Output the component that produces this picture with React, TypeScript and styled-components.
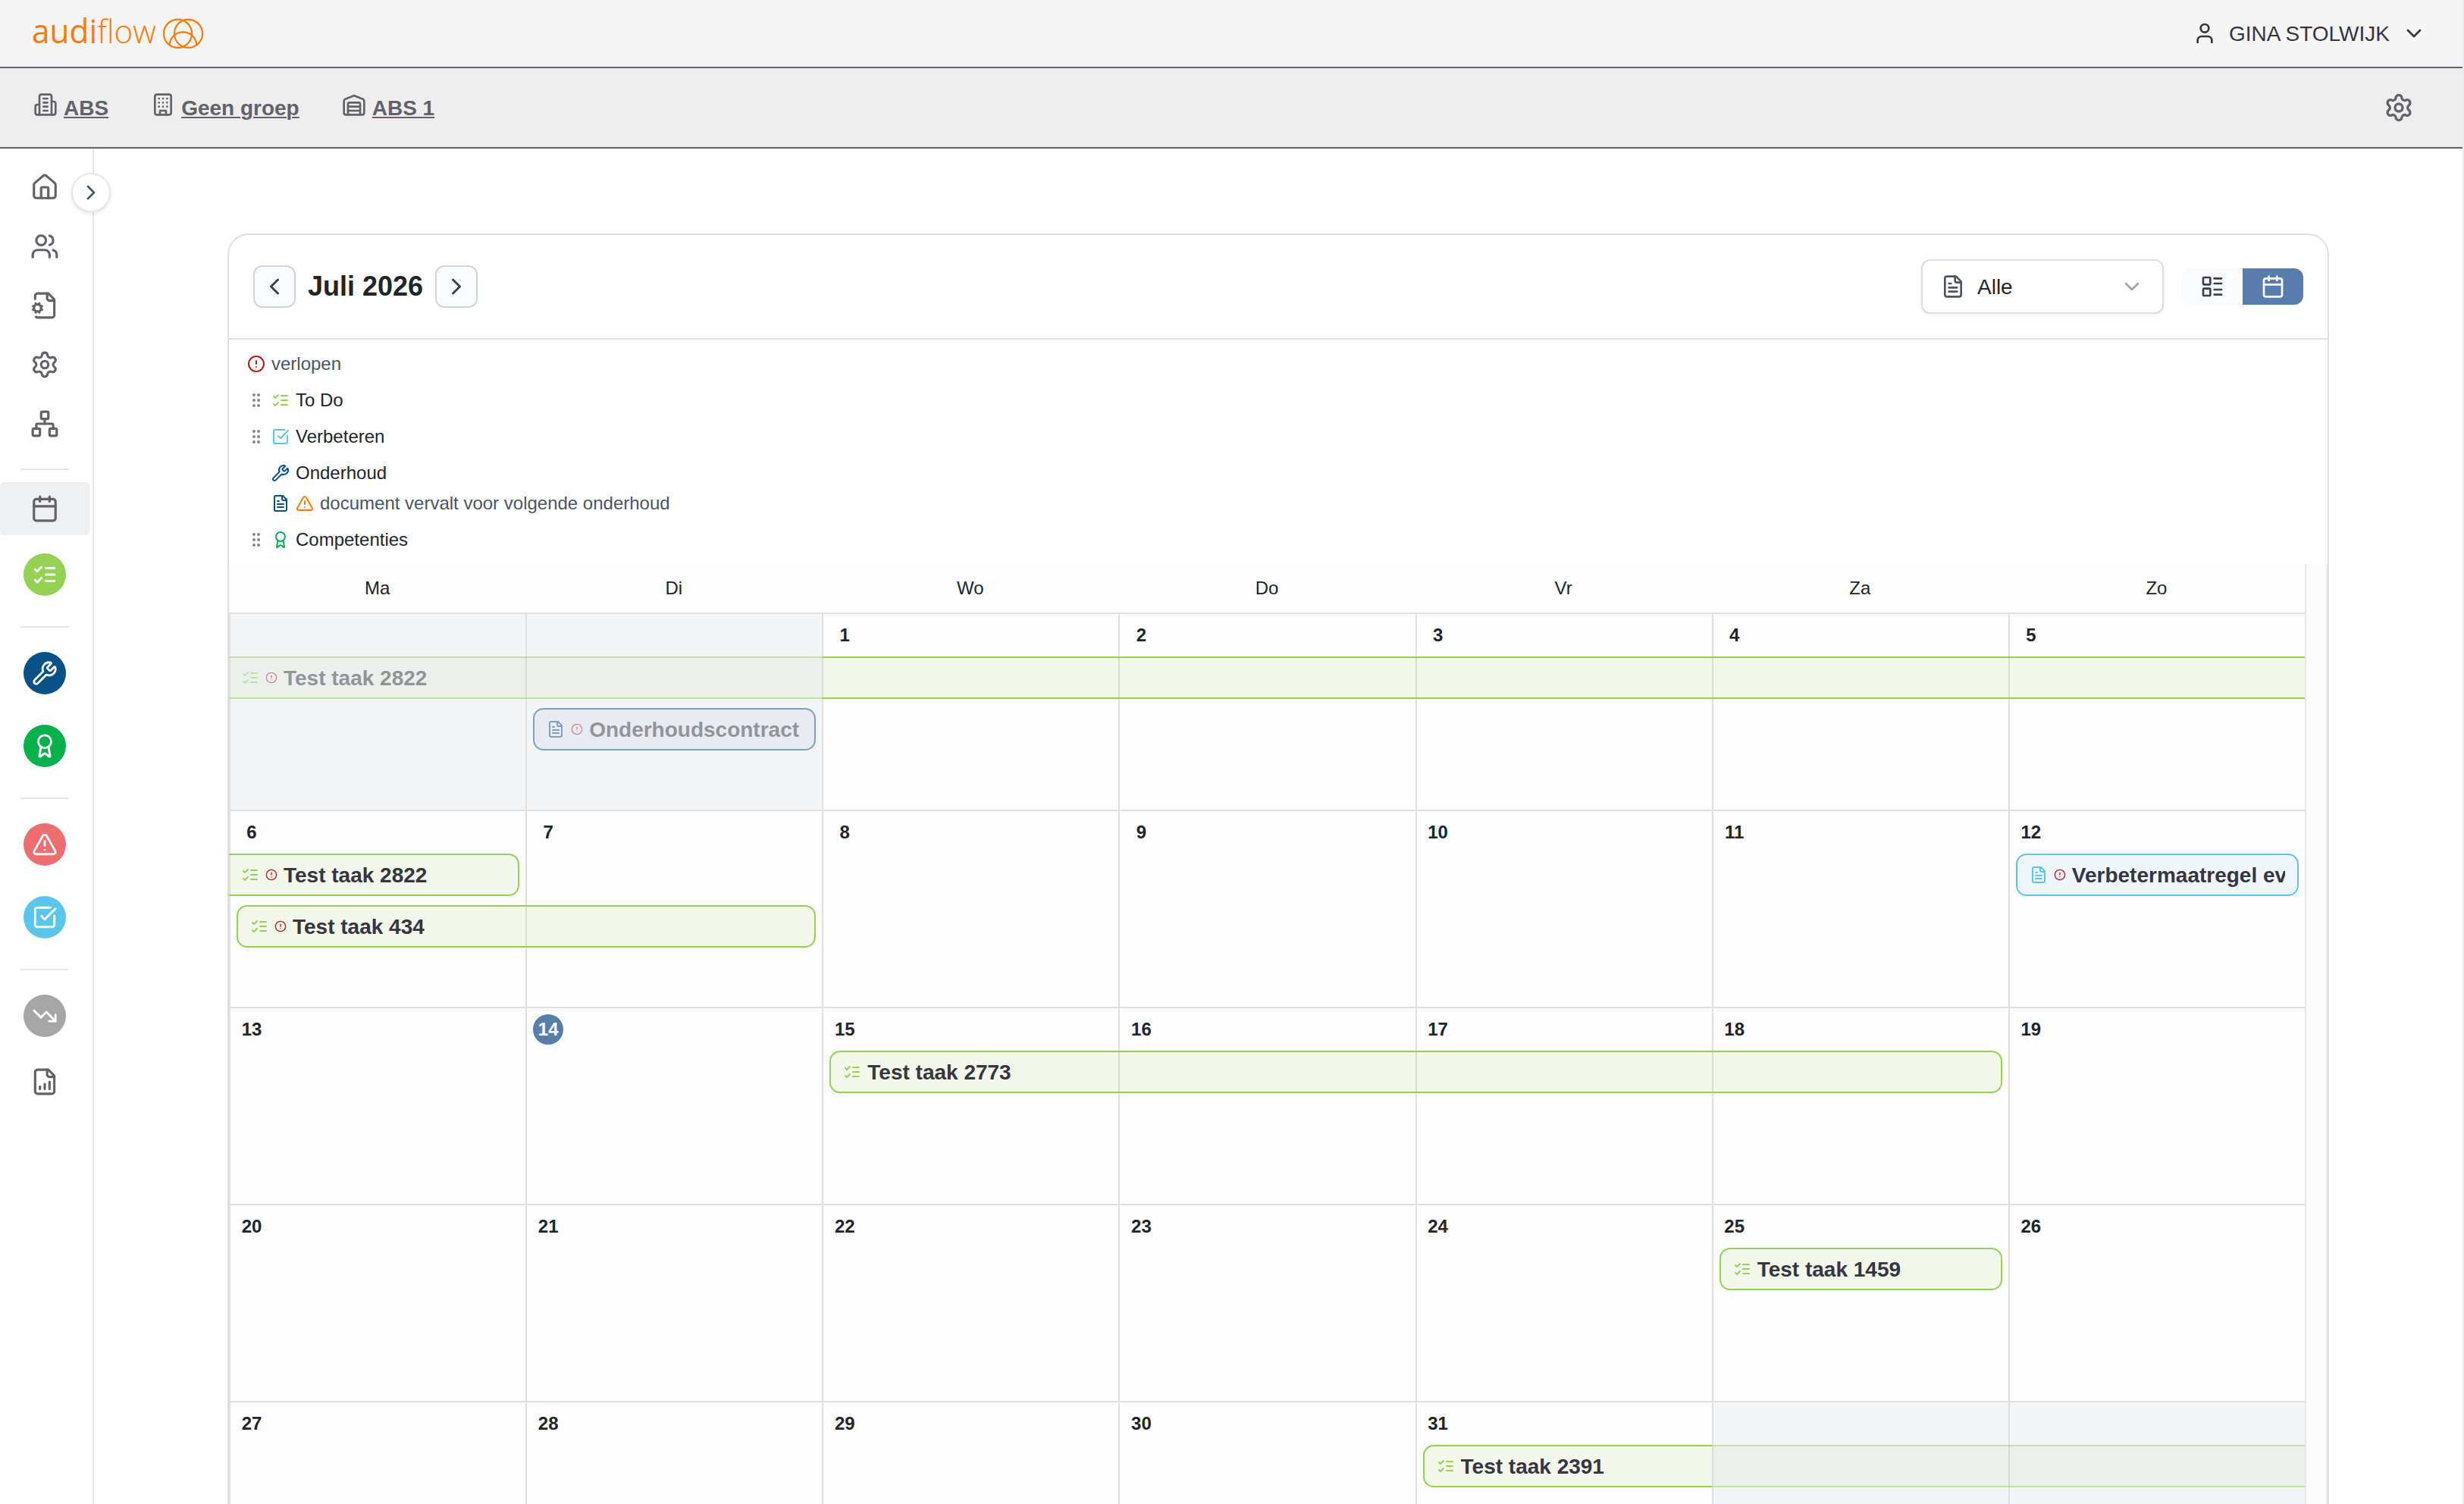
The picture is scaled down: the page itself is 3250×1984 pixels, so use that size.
import React from 'react';
import styled, { createGlobalStyle, css } from 'styled-components';
import {
  Award, Calendar, ChevronDown, ChevronLeft, ChevronRight, CircleAlert, GripVertical, House,
  LayoutList, Network, Settings, SquareCheckBig, TrendingDown, TriangleAlert, User, Users, Wrench,
} from 'lucide-react';

const GlobalStyle = createGlobalStyle`
  *, *::before, *::after { box-sizing: border-box; }
  body {
    margin: 0;
    background: #fff;
    font-family: "Liberation Sans", Arial, sans-serif;
    color: #212529;
    overflow: hidden;
  }
  svg { display: block; flex: none; }
`;

const c = {
  line: '#e0e0e0',
  grey: '#63626b',
  green: '#94d254',
  blue: '#577dad',
  navy: '#075389',
  cyan: '#5bc6ec',
  red: '#b91c1c',
  leaf: '#05b04d',
  orange: '#ff7a0a',
};

const Page = styled.div`
  width: 3250px;
  height: 1984px;
  overflow: hidden;
  display: flex;
  flex-direction: column;
  border-right: 2px solid #ebebed;
`;

const TopBar = styled.header`
  flex: none;
  height: 90px;
  padding: 0 48px 0 40px;
  display: flex;
  align-items: center;
  justify-content: space-between;
  background: #f5f5f5;
  border-bottom: 2px solid ${c.grey};
`;

const UserMenu = styled.div`
  display: flex;
  align-items: center;
  font-size: 28px;
  line-height: 32px;
  color: #363540;
  span { margin: 0 16px; padding-top: 2px; }
`;

const CrumbBar = styled.nav`
  flex: none;
  height: 106px;
  padding: 0 64px 0 44px;
  display: flex;
  align-items: center;
  justify-content: space-between;
  background: #eee;
  color: ${c.grey};
  border-bottom: 2px solid ${c.grey};
`;

const Crumbs = styled.div`
  display: flex;
  gap: 56px;
  padding-top: 2px;
`;

const Crumb = styled.a`
  display: flex;
  gap: 8px;
  font-size: 28px;
  line-height: 42px;
  font-weight: 700;
  text-decoration: underline;
  text-decoration-thickness: 2px;
  text-underline-offset: 2px;
`;

const Body = styled.div`
  flex: 1;
  min-height: 0;
  display: flex;
`;

const Sidebar = styled.aside`
  position: relative;
  flex: none;
  width: 124px;
  padding-top: 16px;
  padding-right: 4px;
  display: flex;
  flex-direction: column;
  border-right: 2px solid #e5e5ea;
  color: ${c.grey};
`;

const SideItem = styled.div<{ $active?: boolean; $top?: number }>`
  flex: none;
  height: 70px;
  width: 119px;
  padding-right: 1px;
  margin-top: ${p => p.$top ?? 8}px;
  display: flex;
  align-items: center;
  justify-content: center;
  border-radius: 6px;
  background: ${p => (p.$active ? '#eff0f2' : 'transparent')};
`;

const Bubble = styled.div<{ $color: string; $top: number }>`
  flex: none;
  width: 56px;
  height: 56px;
  margin: ${p => p.$top}px 0 0 31px;
  border-radius: 50%;
  display: flex;
  align-items: center;
  justify-content: center;
  background: ${p => p.$color};
  color: #fff;
`;

const SideRule = styled.hr<{ $top: number }>`
  flex: none;
  width: 64px;
  height: 2px;
  border: 0;
  margin: ${p => p.$top}px 0 0 27px;
  background: #e5e5ea;
`;

const Expand = styled.button`
  position: absolute;
  top: 32px;
  left: 94px;
  width: 52px;
  height: 52px;
  padding: 0;
  border-radius: 50%;
  border: 2px solid #e5e7eb;
  background: #fff;
  color: #475569;
  display: flex;
  align-items: center;
  justify-content: center;
  box-shadow: 0 2px 5px rgba(0, 0, 0, 0.1);
`;

const Main = styled.main`
  flex: 1;
  padding: 112px 176px 0 176px;
  display: flex;
`;

const Card = styled.section`
  flex: 1;
  height: 1900px;
  display: flex;
  flex-direction: column;
  border: 2px solid ${c.line};
  border-radius: 28px;
`;

const CardHead = styled.div`
  flex: none;
  height: 138px;
  padding: 0 32px;
  display: flex;
  align-items: center;
  justify-content: space-between;
  border-bottom: 2px solid ${c.line};
`;

const Group = styled.div<{ $gap: number }>`
  display: flex;
  align-items: center;
  gap: ${p => p.$gap}px;
`;

const NavButton = styled.button`
  width: 56px;
  height: 56px;
  padding: 0;
  display: flex;
  align-items: center;
  justify-content: center;
  border: 2px solid #d1d5db;
  border-radius: 12px;
  background: #f9fafb;
  color: #374151;
`;

const Title = styled.h2`
  margin: 0;
  font-size: 36px;
  line-height: 44px;
  font-weight: 700;
`;

const Select = styled.div`
  width: 320px;
  height: 72px;
  padding: 0 24px;
  display: flex;
  align-items: center;
  border: 2px solid #dedede;
  border-radius: 12px;
  background: #fff;
  box-shadow: 0 2px 4px rgba(0, 0, 0, 0.06);
  font-size: 28px;
  color: #4b5563;
  span { flex: 1; margin-left: 16px; padding-top: 1px; color: #212529; }
`;

const Switch = styled.div`
  display: flex;
  border-radius: 12px;
  overflow: hidden;
`;

const SwitchItem = styled.div<{ $on?: boolean }>`
  width: 80px;
  height: 48px;
  display: flex;
  align-items: center;
  justify-content: center;
  background: ${p => (p.$on ? c.blue : '#f9fafb')};
  color: ${p => (p.$on ? '#fff' : '#374151')};
`;

const Legend = styled.div`
  flex: none;
  height: 296px;
  padding: 12px 24px 0;
  font-size: 24px;
`;

const LegendRow = styled.div<{ $tight?: boolean; $indent?: boolean; $muted?: boolean }>`
  height: 40px;
  margin-top: ${p => (p.$tight ? 0 : 8)}px;
  padding-left: ${p => (p.$indent ? 32 : 0)}px;
  display: flex;
  align-items: center;
  gap: 8px;
  color: ${p => (p.$muted ? '#4b5563' : '#212529')};
  &:first-child { margin-top: 0; }
`;

const CalendarWrap = styled.div`
  flex: 1;
  display: flex;
`;

const CalendarTable = styled.div`
  flex: 1;
  background: #fdfdfd;
`;

const Track = styled.div`
  width: 30px;
  background: #fafafa;
  border: solid #e8e8e8;
  border-width: 0 2px;
`;

const WeekHead = styled.div`
  display: grid;
  grid-template-columns: repeat(7, 1fr);
  height: 64px;
  font-size: 24px;
  line-height: 64px;
  text-align: center;
`;

const Week = styled.div`
  display: grid;
  grid-template-columns: repeat(7, minmax(0, 1fr));
  grid-template-rows: 56px 56px 12px 56px 1fr;
  height: 260px;
  border-top: 2px solid ${c.line};
`;

const Day = styled.div<{ $col: number; $out: boolean }>`
  grid-row: 1 / -1;
  grid-column: ${p => p.$col};
  padding: 8px;
  border-left: 2px solid ${c.line};
  background: ${p => (p.$out ? '#f2f4f6' : 'transparent')};
`;

const DayNumber = styled.div<{ $today: boolean }>`
  width: 40px;
  height: 40px;
  border-radius: 50%;
  text-align: center;
  font-size: 24px;
  line-height: 40px;
  font-weight: 700;
  white-space: nowrap;
  ${p => p.$today && css`background: ${c.blue}; color: #fff;`}
`;

type Kind = 'todo' | 'document' | 'improve';
const kindColor: Record<Kind, string> = { todo: c.green, document: c.navy, improve: c.cyan };
const kindTint: Record<Kind, string> = {
  todo: 'rgba(145, 185, 80, 0.1)',
  document: 'rgba(87, 115, 173, 0.12)',
  improve: '#eff7fd',
};

const Bar = styled.div<{ $kind: Kind; $from: number; $to: number; $line: number; $start: boolean; $end: boolean; $dim: boolean }>`
  grid-row: ${p => p.$line * 2};
  grid-column: ${p => p.$from} / ${p => p.$to + 1};
  margin-left: ${p => (p.$start ? 10 : 0)}px;
  margin-right: ${p => (p.$end ? 8 : 0)}px;
  padding: 0 16px;
  display: flex;
  align-items: center;
  gap: 8px;
  overflow: hidden;
  border: 2px solid ${p => kindColor[p.$kind]};
  border-left-width: ${p => (p.$start ? 2 : 0)}px;
  border-right-width: ${p => (p.$end ? 2 : 0)}px;
  border-radius: ${p => (p.$start ? 14 : 0)}px ${p => (p.$end ? 14 : 0)}px ${p => (p.$end ? 14 : 0)}px ${p => (p.$start ? 14 : 0)}px;
  background: ${p => kindTint[p.$kind]};
  opacity: ${p => (p.$dim ? 0.5 : 1)};
  z-index: 1;
`;

const BarText = styled.span`
  flex: 1;
  padding-top: 2px;
  overflow: hidden;
  white-space: nowrap;
  font-size: 28px;
  line-height: 36px;
  font-weight: 700;
  color: #363540;
`;

interface IconProps { size: number; color?: string }

const LineIcon = ({ size, color = 'currentColor', children }: IconProps & { children: React.ReactNode }) => (
  <svg
    width={size} height={size} viewBox="0 0 24 24" fill="none" stroke={color}
    strokeWidth={2} strokeLinecap="round" strokeLinejoin="round"
  >
    {children}
  </svg>
);

const ListChecks = (p: IconProps) => (
  <LineIcon {...p}>
    <path d="m3 17 2 2 4-4" />
    <path d="m3 7 2 2 4-4" />
    <path d="M13 6h8M13 12h8M13 18h8" />
  </LineIcon>
);

const Sheet = () => (
  <>
    <path d="M15 2H6a2 2 0 0 0-2 2v16a2 2 0 0 0 2 2h12a2 2 0 0 0 2-2V7Z" />
    <path d="M14 2v4a2 2 0 0 0 2 2h4" />
  </>
);

const FileText = (p: IconProps) => (
  <LineIcon {...p}>
    <Sheet />
    <path d="M10 9H8M16 13H8M16 17H8" />
  </LineIcon>
);

const FileChart = (p: IconProps) => (
  <LineIcon {...p}>
    <Sheet />
    <path d="M8 18v-2M12 18v-4M16 18v-6" />
  </LineIcon>
);

const FileCog = (p: IconProps) => (
  <LineIcon {...p}>
    <path d="M14 2v4a2 2 0 0 0 2 2h4" />
    <path d="M4.700 21.500A2 2 0 0 0 6 22h12a2 2 0 0 0 2-2V7l-5-5H6a2 2 0 0 0-2 2v2.500" />
    <path d="m3.200 12.900-.9-.4M3.200 15.100l-.9.4M4.900 11.200l-.4-.9M4.900 16.800l-.4.9M7.500 10.300l-.4.9M7.500 17.700l-.4-.9M9.700 12.500l-.9.400M9.700 15.500l-.9-.4" />
    <circle cx="6" cy="14" r="3" />
  </LineIcon>
);

const OfficeIcon = (p: IconProps) => (
  <LineIcon {...p}>
    <path d="M6 22V4a2 2 0 0 1 2-2h8a2 2 0 0 1 2 2v18Z" />
    <path d="M6 12H4a2 2 0 0 0-2 2v6a2 2 0 0 0 2 2h2" />
    <path d="M18 9h2a2 2 0 0 1 2 2v9a2 2 0 0 1-2 2h-2" />
    <path d="M10 6h4M10 10h4M10 14h4M10 18h4" />
  </LineIcon>
);

const BuildingIcon = (p: IconProps) => (
  <LineIcon {...p}>
    <rect width="16" height="20" x="4" y="2" rx="2" />
    <path d="M9 22v-4h6v4M8 6h.01M16 6h.01M12 6h.01M12 10h.01M12 14h.01M16 10h.01M16 14h.01M8 10h.01M8 14h.01" />
  </LineIcon>
);

const WarehouseIcon = (p: IconProps) => (
  <LineIcon {...p}>
    <path d="M22 8.350V20a2 2 0 0 1-2 2H4a2 2 0 0 1-2-2V8.350A2 2 0 0 1 3.260 6.500l8-3.200a2 2 0 0 1 1.480 0l8 3.200A2 2 0 0 1 22 8.350Z" />
    <path d="M6 18h12M6 14h12" />
    <path d="M6 22V11a1 1 0 0 1 1-1h10a1 1 0 0 1 1 1v11" />
  </LineIcon>
);

const Grip = () => <GripVertical size={24} color="#85858c" />;

const Logo = () => (
  <svg width="231" height="72" viewBox="-3 -12 231 72" fill="none">
    <text
      x="-1" y="36.500" fill={c.orange} fontFamily="'Open Sans', sans-serif" fontSize="43"
      textLength="164" lengthAdjust="spacingAndGlyphs"
    >
      <tspan fontWeight="400">audi</tspan><tspan fontWeight="300">flow</tspan>
    </text>
    <g stroke={c.orange} strokeWidth="2.200">
      <circle cx="191.500" cy="24.300" r="18.600" />
      <circle cx="205.500" cy="24.300" r="18.600" />
      <path d="M180.700 38.800A17.850 17.850 0 0 1 216.300 38.800" />
    </g>
  </svg>
);

interface Entry { kind: Kind; from: number; to: number; line?: number; start?: boolean; end?: boolean; dim?: boolean; late?: boolean; text?: string }

function EventBar({ kind, from, to, line = 1, start = false, end = false, dim = false, late, text }: Entry) {
  const Icon = kind === 'todo' ? ListChecks : FileText;
  return (
    <Bar $kind={kind} $from={from} $to={to} $line={line} $start={start} $end={end} $dim={dim}>
      {text && (
        <>
          <Icon size={24} color={kindColor[kind]} />
          {late && <CircleAlert size={16} color={c.red} />}
          <BarText>{text}</BarText>
        </>
      )}
    </Bar>
  );
}

const weeks: { days: (number | null)[]; events: Entry[] }[] = [
  {
    days: [null, null, 1, 2, 3, 4, 5],
    events: [
      { kind: 'todo', from: 1, to: 2, dim: true, late: true, text: 'Test taak 2822' },
      { kind: 'todo', from: 3, to: 7 },
      { kind: 'document', from: 2, to: 2, line: 2, start: true, end: true, dim: true, late: true, text: 'Onderhoudscontract' },
    ],
  },
  {
    days: [6, 7, 8, 9, 10, 11, 12],
    events: [
      { kind: 'todo', from: 1, to: 1, end: true, late: true, text: 'Test taak 2822' },
      { kind: 'todo', from: 1, to: 2, line: 2, start: true, end: true, late: true, text: 'Test taak 434' },
      { kind: 'improve', from: 7, to: 7, start: true, end: true, late: true, text: 'Verbetermaatregel ev' },
    ],
  },
  { days: [13, 14, 15, 16, 17, 18, 19], events: [{ kind: 'todo', from: 3, to: 6, start: true, end: true, text: 'Test taak 2773' }] },
  { days: [20, 21, 22, 23, 24, 25, 26], events: [{ kind: 'todo', from: 6, to: 6, start: true, end: true, text: 'Test taak 1459' }] },
  {
    days: [27, 28, 29, 30, 31, null, null],
    events: [
      { kind: 'todo', from: 5, to: 5, start: true, text: 'Test taak 2391' },
      { kind: 'todo', from: 6, to: 7, dim: true },
    ],
  },
];

export default function App() {
  return (
    <Page>
      <GlobalStyle />
      <TopBar>
        <Logo />
        <UserMenu>
          <User size={32} />
          <span>GINA STOLWIJK</span>
          <ChevronDown size={32} />
        </UserMenu>
      </TopBar>
      <CrumbBar>
        <Crumbs>
          <Crumb><OfficeIcon size={32} />ABS</Crumb>
          <Crumb><BuildingIcon size={32} />Geen groep</Crumb>
          <Crumb><WarehouseIcon size={32} />ABS 1</Crumb>
        </Crumbs>
        <Settings size={40} />
      </CrumbBar>
      <Body>
        <Sidebar>
          <SideItem $top={0}><House size={38} /></SideItem>
          <SideItem><Users size={38} /></SideItem>
          <SideItem><FileCog size={38} /></SideItem>
          <SideItem><Settings size={38} /></SideItem>
          <SideItem><Network size={38} /></SideItem>
          <SideRule $top={24} />
          <SideItem $active $top={16}><Calendar size={38} /></SideItem>
          <Bubble $color={c.green} $top={24}><ListChecks size={34} /></Bubble>
          <SideRule $top={40} />
          <Bubble $color={c.navy} $top={32}><Wrench size={34} /></Bubble>
          <Bubble $color={c.leaf} $top={40}><Award size={34} /></Bubble>
          <SideRule $top={40} />
          <Bubble $color="#ed6e6e" $top={32}><TriangleAlert size={34} /></Bubble>
          <Bubble $color={c.cyan} $top={40}><SquareCheckBig size={34} /></Bubble>
          <SideRule $top={40} />
          <Bubble $color="#a6a6a6" $top={32}><TrendingDown size={34} /></Bubble>
          <SideItem $top={24}><FileChart size={38} /></SideItem>
          <Expand><ChevronRight size={32} /></Expand>
        </Sidebar>
        <Main>
          <Card>
            <CardHead>
              <Group $gap={16}>
                <NavButton><ChevronLeft size={36} /></NavButton>
                <Title>Juli 2026</Title>
                <NavButton><ChevronRight size={36} /></NavButton>
              </Group>
              <Group $gap={24}>
                <Select>
                  <FileText size={32} />
                  <span>Alle</span>
                  <ChevronDown size={32} color="#a0a3a8" />
                </Select>
                <Switch>
                  <SwitchItem><LayoutList size={32} /></SwitchItem>
                  <SwitchItem $on><Calendar size={32} /></SwitchItem>
                </Switch>
              </Group>
            </CardHead>
            <Legend>
              <LegendRow $muted><CircleAlert size={24} color={c.red} />verlopen</LegendRow>
              <LegendRow><Grip /><ListChecks size={24} color={c.green} />To Do</LegendRow>
              <LegendRow><Grip /><SquareCheckBig size={24} color={c.cyan} />Verbeteren</LegendRow>
              <LegendRow $indent><Wrench size={24} color={c.navy} />Onderhoud</LegendRow>
              <LegendRow $indent $tight $muted>
                <FileText size={24} color={c.navy} />
                <TriangleAlert size={24} color={c.orange} />
                document vervalt voor volgende onderhoud
              </LegendRow>
              <LegendRow><Grip /><Award size={24} color={c.leaf} />Competenties</LegendRow>
            </Legend>
            <CalendarWrap>
              <CalendarTable>
                <WeekHead>
                  {['Ma', 'Di', 'Wo', 'Do', 'Vr', 'Za', 'Zo'].map(d => <div key={d}>{d}</div>)}
                </WeekHead>
                {weeks.map((week, w) => (
                  <Week key={w}>
                    {week.days.map((day, i) => (
                      <Day key={i} $col={i + 1} $out={day === null}>
                        {day !== null && <DayNumber $today={day === 14}>{day}</DayNumber>}
                      </Day>
                    ))}
                    {week.events.map((e, i) => <EventBar key={i} {...e} />)}
                  </Week>
                ))}
              </CalendarTable>
              <Track />
            </CalendarWrap>
          </Card>
        </Main>
      </Body>
    </Page>
  );
}
